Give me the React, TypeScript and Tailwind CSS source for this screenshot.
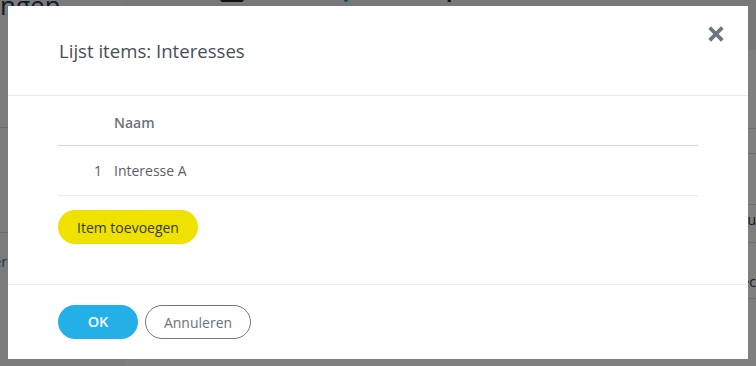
import { X } from 'lucide-react'

export default function App() {
  return (
    <div className="relative h-[366px] w-[756px] overflow-hidden bg-white font-['Open_Sans',sans-serif]">
      {/* Underlying page, mostly hidden */}
      <div className="flex h-full">
        <div className="w-[125px] shrink-0 bg-[#f6f6f6]">
          <div className="-mt-[14px] text-[26px] text-[#1c3550]">ngen</div>
          <div className="mt-[102px] border-t border-[#d4d4d4]" />
          <div className="mt-[104px] border-t border-[#d4d4d4]" />
          <div className="-ml-[40px] mt-[18px] text-[14px] text-[#1f6fa8]">Beheer</div>
        </div>
        <div className="flex flex-1 flex-col">
          <div className="flex h-[50px] items-start gap-[100px] bg-[#f0f0f0] pl-[95px]">
            <div className="-mt-[4px] h-[6px] w-[24px] rounded bg-[#222]" />
            <div className="-mt-[3px] h-[5px] w-[4px] rounded-full bg-[#1a8fd0]" />
            <div className="-mt-[3px] h-[5px] w-[3px] rotate-12 bg-[#222]" />
          </div>
          <div className="mt-[78px] border-t border-[#dcdcdc]" />
          <div className="mt-[24px] border-t border-[#dcdcdc]" />
          <div className="mt-[50px] flex justify-end border-t border-[#dcdcdc] pt-[4px] text-[14px] text-[#333]">u</div>
          <div className="mt-[12px] border-t border-[#dcdcdc]" />
          <div className="mt-[28px] flex justify-end text-[14px] text-[#333]">ec</div>
          <div className="mt-[6px] border-t border-[#dcdcdc]" />
        </div>
      </div>

      {/* Overlay */}
      <div className="absolute inset-0 bg-black/50" />

      {/* Modal */}
      <div className="absolute left-[8px] top-[6px] flex h-[353px] w-[740px] flex-col bg-white">
        <div className="relative flex h-[90px] items-center border-b border-[#e9e9e9] px-[51px]">
          <h2 className="text-[18.6px] text-[#474d55]">Lijst items: Interesses</h2>
          <button className="absolute right-[22px] top-[18px] text-[#6d7680]">
            <X size={20} strokeWidth={4.5} strokeLinecap="square" />
          </button>
        </div>

        <div className="flex flex-1 flex-col px-[50px] pt-[4px]">
          <div className="w-[640px]">
            <div className="flex h-[46px] items-center border-b border-[#d6d6d6]">
              <div className="w-[56px]" />
              <div className="text-[14px] font-semibold text-[#6b737c]">Naam</div>
            </div>
            <div className="flex h-[50px] items-center border-b border-[#ececec] text-[14px] text-[#585f68]">
              <div className="w-[44px] text-right">1</div>
              <div className="pl-[12px]">Interesse A</div>
            </div>
          </div>
          <div className="mt-[14px]">
            <button className="h-[34px] rounded-full bg-[#efe200] px-[19px] text-[14px] text-[#3a3a2a]">
              Item toevoegen
            </button>
          </div>
        </div>

        <div className="flex h-[75px] gap-[7px] border-t border-[#ececec] px-[50px] pt-[20px]">
          <button className="h-[34px] w-[80px] rounded-full bg-[#24afe6] text-[14.5px] font-semibold text-white">
            OK
          </button>
          <button className="h-[34px] w-[106px] rounded-full border border-[#6f777f] text-[14px] text-[#6a727b]">
            Annuleren
          </button>
        </div>
      </div>
    </div>
  )
}
